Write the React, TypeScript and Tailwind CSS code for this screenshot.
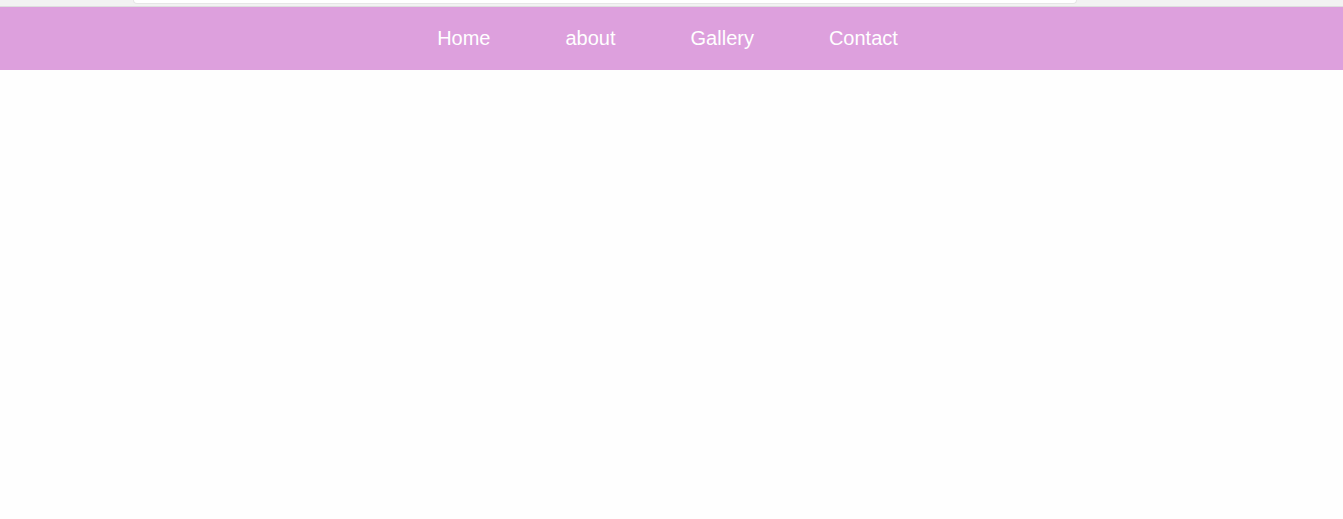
export default function App() {
  const items = ["Home", "about", "Gallery", "Contact"];
  return (
    <div className="min-h-[519px] bg-[#fefefe]" style={{ fontFamily: '"Liberation Sans", Arial, sans-serif' }}>
      <div className="h-[6px] bg-[#f2f2f2] flex">
        <div className="ml-[133px] w-[944px] h-[4px] bg-white rounded-b-[8px] border-b border-x border-[#e6e6e6]" />
      </div>
      <div className="h-px bg-[#dedede]" />
      <nav className="h-[63px] bg-[#dda0dd] flex items-center justify-center pr-[8px]">
        <ul className="flex gap-[75px] text-[20px] text-white leading-none pb-[2px]">
          {items.map((t) => (
            <li key={t}>{t}</li>
          ))}
        </ul>
      </nav>
    </div>
  );
}
